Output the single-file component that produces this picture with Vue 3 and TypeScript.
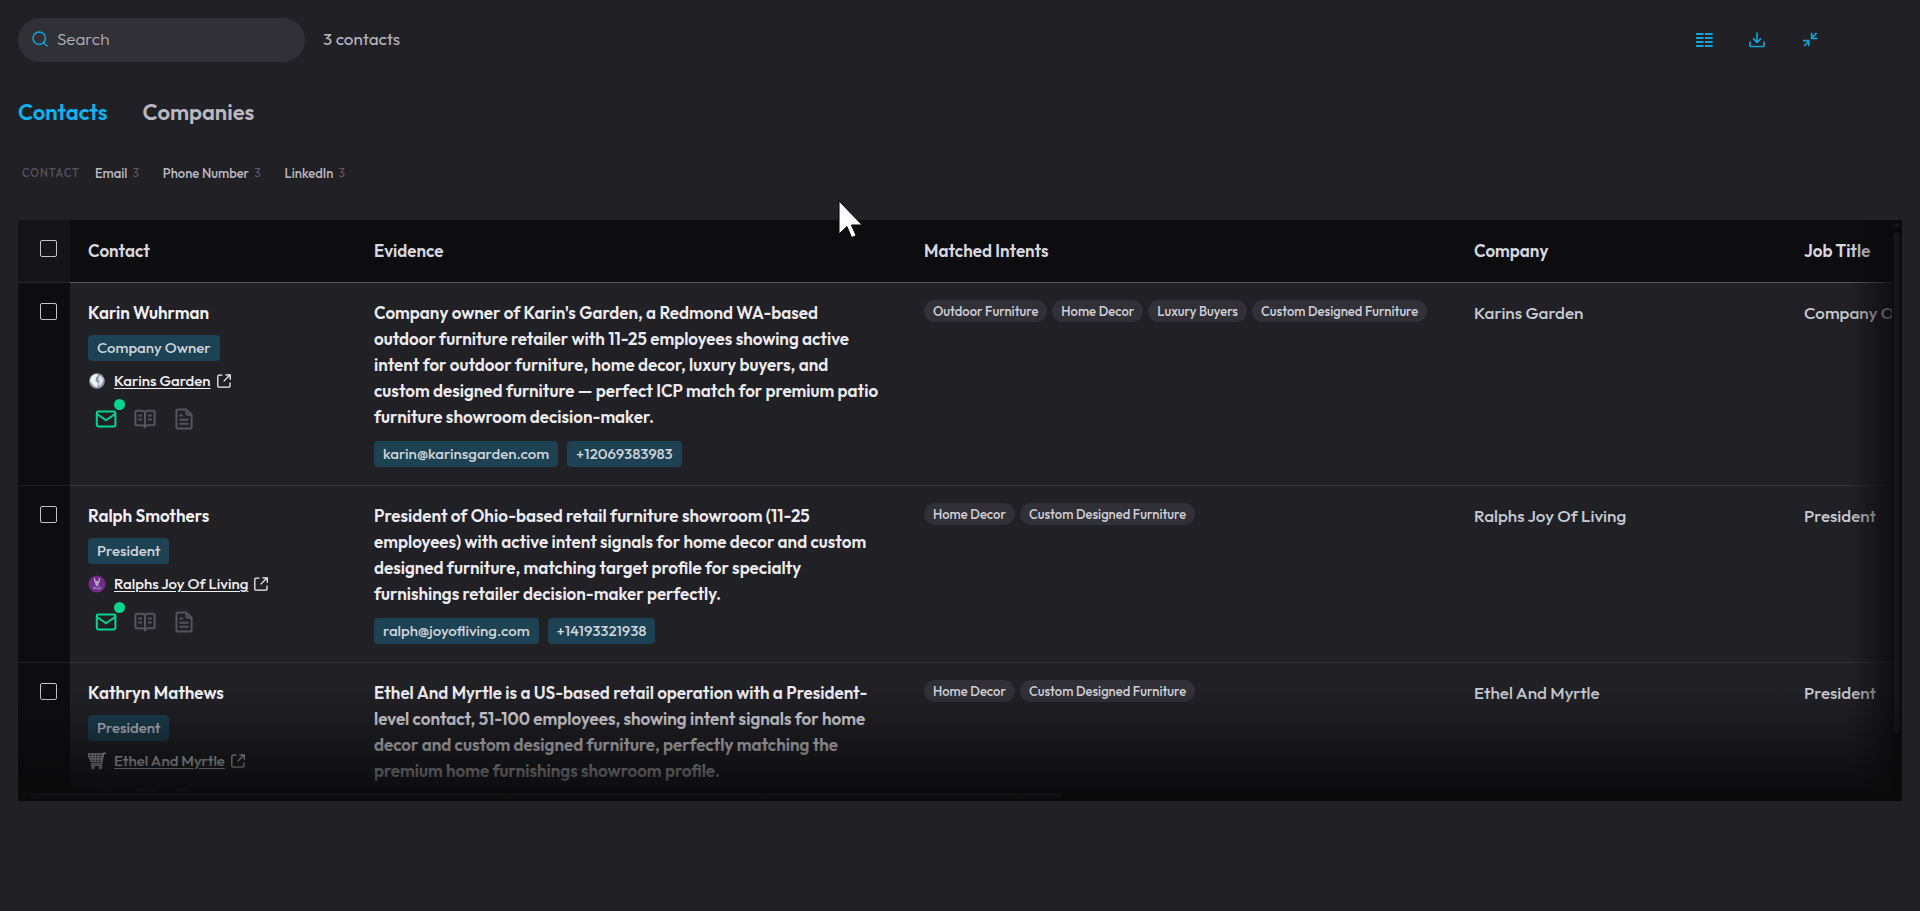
<script setup lang="ts">
interface Row {
  name: string
  title: string
  company: string
  icon: 'globe' | 'emblem' | 'cart'
  mailed: boolean
  evidence: string[]
  chips: string[]
  intents: string[]
}

const columns = ['Contact', 'Evidence', 'Matched Intents', 'Company', 'Job Title']
const filters = [
  { label: 'Email', count: 3 },
  { label: 'Phone Number', count: 3 },
  { label: 'LinkedIn', count: 3 },
]
const rows: Row[] = [
  {
    name: 'Karin Wuhrman',
    title: 'Company Owner',
    company: 'Karins Garden',
    icon: 'globe',
    mailed: true,
    evidence: [
      "Company owner of Karin's Garden, a Redmond WA-based",
      'outdoor furniture retailer with 11-25 employees showing active',
      'intent for outdoor furniture, home decor, luxury buyers, and',
      'custom designed furniture — perfect ICP match for premium patio',
      'furniture showroom decision-maker.',
    ],
    chips: ['karin@karinsgarden.com', '+12069383983'],
    intents: ['Outdoor Furniture', 'Home Decor', 'Luxury Buyers', 'Custom Designed Furniture'],
  },
  {
    name: 'Ralph Smothers',
    title: 'President',
    company: 'Ralphs Joy Of Living',
    icon: 'emblem',
    mailed: true,
    evidence: [
      'President of Ohio-based retail furniture showroom (11-25',
      'employees) with active intent signals for home decor and custom',
      'designed furniture, matching target profile for specialty',
      'furnishings retailer decision-maker perfectly.',
    ],
    chips: ['ralph@joyofliving.com', '+14193321938'],
    intents: ['Home Decor', 'Custom Designed Furniture'],
  },
  {
    name: 'Kathryn Mathews',
    title: 'President',
    company: 'Ethel And Myrtle',
    icon: 'cart',
    mailed: false,
    evidence: [
      'Ethel And Myrtle is a US-based retail operation with a President-',
      'level contact, 51-100 employees, showing intent signals for home',
      'decor and custom designed furniture, perfectly matching the',
      'premium home furnishings showroom profile.',
    ],
    chips: [],
    intents: ['Home Decor', 'Custom Designed Furniture'],
  },
]
</script>

<template>
  <main class="page">
    <header class="toolbar">
      <label class="search">
        <svg class="search-icon" width="16" height="16" viewBox="0 0 16 16" fill="none" stroke="currentColor" stroke-width="1.5" stroke-linecap="round">
          <circle cx="7.2" cy="7.2" r="6.2" /><path d="M11.800 11.800l3.200 3.200" />
        </svg>
        <input type="text" placeholder="Search" aria-label="Search" />
      </label>
      <span class="count">3 contacts</span>
      <div class="actions">
        <button type="button" aria-label="Columns">
          <svg width="18" height="18" viewBox="0 0 18 18" fill="currentColor">
            <path d="M1 2h7.600v2H1zM10 2h7.600v2H10zM1 6h7.600v2H1zM10 6h7.600v2H10zM1 10h7.600v2H1zM10 10h7.600v2H10zM1 14h7.600v2H1zM10 14h7.600v2H10z" />
          </svg>
        </button>
        <button type="button" aria-label="Download">
          <svg width="18" height="18" viewBox="0 0 18 18" fill="none" stroke="currentColor" stroke-width="1.600" stroke-linejoin="round">
            <path d="M9 1.500v9.800M5 7.400l4 4 4-4M2 10.500v4.200a.8.8 0 0 0 .8.8h12.400a.8.8 0 0 0 .8-.8v-4.200" />
          </svg>
        </button>
        <button type="button" aria-label="Collapse">
          <svg width="18" height="18" viewBox="0 0 18 18" fill="none" stroke="currentColor" stroke-width="1.700">
            <path d="M15.600 2l-5 5M10.600 1.800v5.500h5.600M3 15l5-5M2 9.700h5.700v5.600" />
          </svg>
        </button>
      </div>
    </header>

    <nav class="tabs">
      <button type="button" class="tab active">Contacts</button>
      <button type="button" class="tab">Companies</button>
    </nav>

    <div class="filters">
      <span class="group">CONTACT</span>
      <button v-for="f in filters" :key="f.label" type="button" class="filter">
        <span>{{ f.label }}</span><span class="num">{{ f.count }}</span>
      </button>
    </div>

    <section class="table-box">
      <div class="viewport">
        <table>
          <colgroup>
            <col class="c-check" /><col class="c-contact" /><col class="c-wide" /><col class="c-wide" /><col class="c-company" /><col class="c-company" />
          </colgroup>
          <thead>
            <tr>
              <th class="check"><input type="checkbox" aria-label="Select all" /></th>
              <th v-for="c in columns" :key="c" scope="col">{{ c }}</th>
            </tr>
          </thead>
          <tbody>
            <tr v-for="r in rows" :key="r.name">
              <td class="check"><input type="checkbox" :aria-label="'Select ' + r.name" /></td>
              <td>
                <div class="name">{{ r.name }}</div>
                <span class="chip">{{ r.title }}</span>
                <div class="org">
                  <svg v-if="r.icon === 'globe'" class="favicon" viewBox="0 0 18 18">
                    <circle cx="9" cy="9" r="7.800" fill="#8f97ad" />
                    <path d="M2.600 6C4.200 3 7.400 1.600 10 2L9.200 4.400 7.600 5.600l.6 1.800-1 1.200 2.600 2.200-.4 4.400-3.200-1-2.400-3-1.800-2.200z" fill="#f1f2f6" />
                    <path d="M11.200 3.400c2.200.6 3.800 2.400 4.300 4.400L14.600 10l-1.600 2.800-2.200 1.400-.4-2.800 1-2-1.200-1.800z" fill="#dfe2ec" />
                  </svg>
                  <svg v-else-if="r.icon === 'emblem'" class="favicon" viewBox="0 0 18 18">
                    <circle cx="9" cy="9" r="8.600" fill="#6f2c87" />
                    <path d="M6.400 3.200l1 4.600M11.600 3.200l-1 4.600" stroke="#c9b6d6" stroke-width="1.200" />
                    <path d="M7 6h4l-.6 4.400L9 11.600l-1.400-1.200z" fill="#b7a3c9" />
                    <path d="M4.600 11.400l3 .6 1.400 1 1.400-1 3-.6-.6 2.800H5.200z" fill="#8d6fc0" />
                  </svg>
                  <svg v-else class="favicon" viewBox="0 0 18 18" fill="none" stroke="#d0d0d4" stroke-width="1.400">
                    <path d="M18 1.200h-2.400l-2 10.600H3.600M0 2h14.600l-1.600 7.600H3zM1.400 4.600h12.400M2 7h11.400M4 2l1 7.600M7 2l.4 7.600M10.400 2v7.600M3.600 11.800v1.600h10.600" />
                    <circle cx="5" cy="15.400" r="1.200" fill="#d0d0d4" /><circle cx="12.400" cy="15.400" r="1.200" fill="#d0d0d4" />
                  </svg>
                  <a href="#">{{ r.company }}</a>
                  <svg class="ext" width="14" height="14" viewBox="0 0 14 14" fill="none" stroke="currentColor" stroke-width="1.300" stroke-linejoin="round">
                    <path d="M5.400 1.200H2A1.200 1.200 0 0 0 .8 2.400V12A1.200 1.200 0 0 0 2 13.200h9.800A1.200 1.200 0 0 0 13 12V8.600M8.400.8h4.900v4.900M13.200.8L6.600 7.400" />
                  </svg>
                </div>
                <div class="channels">
                  <button type="button" class="mail" :class="{ sent: r.mailed }" aria-label="Email">
                    <svg width="24" height="24" viewBox="0 0 24 24" fill="none" stroke="currentColor" stroke-width="2" stroke-linejoin="round" stroke-linecap="round">
                      <rect x="2.800" y="4.600" width="18.600" height="14.800" rx="1.400" /><path d="M3 7l9 6.200L21 7" />
                    </svg>
                    <i v-if="r.mailed" class="dot"></i>
                  </button>
                  <button type="button" aria-label="Read">
                    <svg width="24" height="24" viewBox="0 0 24 24" fill="none" stroke="currentColor" stroke-width="2" stroke-linejoin="round" stroke-linecap="round">
                      <path d="M12 6.200C12 4.600 10.800 3.800 9.400 3.800H3.400a1 1 0 0 0-1 1v12.400a1 1 0 0 0 1 1h5.400c1.800 0 3.200.8 3.200 2.400 0-1.600 1.400-2.400 3.200-2.400h5.400a1 1 0 0 0 1-1V4.800a1 1 0 0 0-1-1h-6C13.200 3.800 12 4.600 12 6.200zM12 6.200v14M6 8.600h2.200M6 12.600h2.200M15.800 8.600H18M15.800 12.600H18" />
                    </svg>
                  </button>
                  <button type="button" aria-label="Notes">
                    <svg width="24" height="24" viewBox="0 0 24 24" fill="none" stroke="currentColor" stroke-width="2" stroke-linejoin="round" stroke-linecap="round">
                      <path d="M14.400 2.600H6a1.600 1.600 0 0 0-1.600 1.600v15.800a1.600 1.600 0 0 0 1.600 1.600h12a1.600 1.600 0 0 0 1.600-1.600V7.800zM14.400 2.600v4a1.200 1.200 0 0 0 1.200 1.200h4M8.200 8.600h2M8.200 12.800h7.600M8.200 16.800h7.600" />
                    </svg>
                  </button>
                </div>
              </td>
              <td>
                <p class="evidence"><template v-for="(l, i) in r.evidence" :key="i"><br v-if="i" />{{ l }}</template></p>
                <div v-if="r.chips.length" class="chips">
                  <span v-for="c in r.chips" :key="c" class="chip">{{ c }}</span>
                </div>
              </td>
              <td>
                <div class="intents"><span v-for="t in r.intents" :key="t" class="intent">{{ t }}</span></div>
              </td>
              <td class="plain">{{ r.company }}</td>
              <td class="plain">{{ r.title }}</td>
            </tr>
          </tbody>
        </table>
      </div>
      <div class="vbar"><span class="up"></span><span class="vthumb"></span></div>
      <div class="hbar"><span class="left"></span><span class="hthumb"></span></div>
      <div class="fade-right"></div>
      <div class="fade-bottom"></div>
    </section>

    <svg class="cursor" width="26" height="40" viewBox="0 0 26 40">
      <path d="M1 1v33l8-7.400 4.600 11 4.600-2-4.800-10.600h10.800z" fill="#fff" stroke="#000" stroke-width="1" />
    </svg>
  </main>
</template>

<style>
body { margin: 0; background: #212025; }
</style>

<style scoped>
* { box-sizing: border-box; }
.page {
  min-height: 100vh; padding: 18px 18px 110px; display: flex; flex-direction: column;
  background: #212025; color: #b9b8c0; font: 17px/26px Outfit, Lato, sans-serif; position: relative;
}
button { background: none; border: 0; padding: 0; margin: 0; color: inherit; font: inherit; cursor: pointer; }
svg { display: block; flex: none; }
.toolbar { display: flex; align-items: center; gap: 18px; height: 44px; }
.search { display: flex; align-items: center; width: 287px; height: 44px; padding: 0 14px 2px; gap: 9px; border-radius: 22px; background: #313036; color: #0ea5dc; }
.search input { flex: 1; min-width: 0; padding: 0; border: 0; outline: 0; background: none; color: #b9b8c0; font: 300 17px/24px Outfit, Lato, sans-serif; }
.search input::placeholder { color: #b3b2ba; opacity: 1; }
.count { padding-bottom: 2px; }
.actions { margin-left: auto; margin-right: 83px; display: flex; gap: 35px; color: #0ea5dc; }
.tabs { display: flex; gap: 35px; margin-top: 36px; font-size: 22px; line-height: 28px; font-weight: 600; }
.tab.active { color: #0db2ee; }
.filters { display: flex; align-items: center; gap: 24px; margin-top: 36px; padding-left: 4px; font-size: 13px; line-height: 22px; font-weight: 500; height: 22px; }
.group { color: #55545b; font-size: 11px; letter-spacing: 1px; margin-right: -9px; }
.filter { display: flex; gap: 5px; }
.num { color: #5c5b63; font-size: 12px; font-weight: 400; }
.table-box { position: relative; margin-top: 36px; flex: 1 0 0; min-height: 400px; background: #0d0d0f; overflow: hidden; display: flex; }
.viewport { flex: 1; min-width: 0; overflow: hidden; margin: 0 10px 10px 0; contain: size; }
table { border-collapse: separate; border-spacing: 0; table-layout: fixed; width: 2098px; }
.c-check { width: 52px; }
.c-contact { width: 286px; }
.c-wide { width: 550px; }
.c-company { width: 330px; }
th { height: 63px; padding: 0 18px; text-align: left; font-weight: 600; color: #d9d8e0; background: #0d0d0f; border-bottom: 1px solid #5a5960; }
td { padding: 17px 18px 18px; vertical-align: top; background: #212025; border-bottom: 1px solid #323137; white-space: nowrap; }
th.check { background: #151517; padding: 0 0 5px 22px; border-bottom-color: #27262b; }
td.check { background: #0d0d0f; padding: 20px 0 0 22px; border-bottom-color: #212025; }
.check input { appearance: none; display: block; width: 17px; height: 17px; margin: 0; border: 1px solid #c4c3cb; border-radius: 2px; background: transparent; }
.name { color: #f1f1f7; font-weight: 600; }
.chip { display: inline-block; padding: 0 9px; height: 26px; line-height: 26px; border-radius: 4px; background: #1c4254; color: #d0d3da; font-size: 15px; font-weight: 500; }
td > .chip { margin-top: 9px; display: table; }
.org { display: flex; align-items: center; margin-top: 8px; height: 24px; font-size: 15px; font-weight: 500; color: #f1f1f7; }
.favicon { width: 18px; height: 18px; margin-right: 8px; }
.org a { color: inherit; text-decoration: underline; text-underline-offset: 2px; }
.ext { margin-left: 6px; }
.channels { display: flex; gap: 15px; margin-top: 14px; padding-left: 6px; color: #55545b; }
.mail { position: relative; }
.mail.sent { color: #05d68f; }
.dot { position: absolute; right: -7px; top: -8px; width: 11px; height: 11px; border-radius: 50%; background: #05d68f; }
.evidence { margin: 0; color: #ecebf2; font-weight: 600; }
.chips { display: flex; gap: 9px; margin-top: 11px; }
.intents { display: flex; gap: 5px; }
.intent { height: 22px; line-height: 22px; padding: 0 9px; border-radius: 11px; background: #313036; color: #d0cfd8; font-size: 13px; font-weight: 500; }
.plain { color: #c6cad2; font-weight: 500; }
.vbar { position: absolute; right: 0; top: 0; bottom: 10px; width: 10px; background: #151517; }
.up { position: absolute; left: 2px; top: 3px; border: 3px solid transparent; border-bottom: 4px solid #55545b; border-top: 0; }
.vthumb { position: absolute; left: 2px; top: 12px; width: 6px; height: 88%; border-radius: 3px; background: #4a494f; }
.hbar { position: absolute; left: 0; bottom: 0; right: 10px; height: 10px; background: #151517; }
.left { position: absolute; left: 3px; top: 2px; border: 3px solid transparent; border-right: 4px solid #55545b; border-left: 0; }
.hthumb { position: absolute; left: 12px; top: 2px; width: 55%; height: 6px; border-radius: 3px; background: #55545b; }
.fade-right { position: absolute; top: 0; right: 0; bottom: 0; width: 53px; background: linear-gradient(to right, rgba(9, 9, 10, 0), rgba(9, 9, 10, 0.9)); pointer-events: none; }
.fade-bottom { position: absolute; left: 0; right: 0; bottom: 0; height: 110px; background: linear-gradient(to bottom, rgba(9, 9, 10, 0), rgba(9, 9, 10, 0.95)); pointer-events: none; }
.cursor { position: absolute; left: 838px; top: 200px; }
</style>
